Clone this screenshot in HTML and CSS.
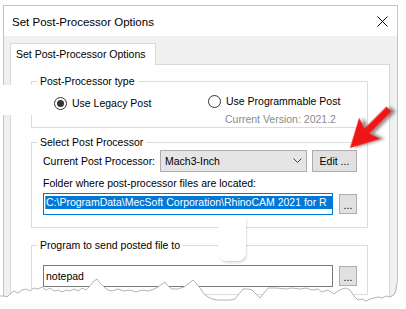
FILE: index.html
```html
<!DOCTYPE html>
<html lang="en">
<head>
    <meta charset="UTF-8">
    <title>Set Post-Processor Options</title>
    <link rel="stylesheet" href="styles.css">
</head>
<body>
    <div class="dialog">
        <div class="titlebar">
            <span class="title">Set Post-Processor Options</span>
            <svg class="close" width="11" height="11" viewBox="0 0 11 11">
                <path d="M0.5 0.5 L10.5 10.5 M10.5 0.5 L0.5 10.5" stroke="#000" stroke-width="1" fill="none"/>
            </svg>
        </div>
        <div class="dialog-body">
            <div class="tab">Set Post-Processor Options</div>
            <div class="panel">
                <!-- Post-Processor type -->
                <div class="group group-type">
                    <div class="legend">Post-Processor type</div>
                    <div class="radio-row">
                        <label class="radio radio-legacy checked"><span class="dot"></span>Use Legacy Post</label>
                        <div class="radio-col">
                            <label class="radio"><span class="dot"></span>Use Programmable Post</label>
                            <div class="version">Current Version: 2021.2</div>
                        </div>
                    </div>
                </div>

                <!-- Select Post Processor -->
                <div class="group group-select">
                    <div class="legend">Select Post Processor</div>
                    <div class="row row-combo">
                        <span class="row-label">Current Post Processor:</span>
                        <div class="combo">
                            <span>Mach3-Inch</span>
                            <svg width="9" height="6" viewBox="0 0 9 6"><path d="M0.5 0.5 L4.5 4.5 L8.5 0.5" stroke="#444" fill="none"/></svg>
                        </div>
                        <div class="btn btn-edit">Edit ...</div>
                    </div>
                    <div class="folder-label">Folder where post-processor files are located:</div>
                    <div class="row row-field">
                        <div class="field field-focus"><span class="selected">C:\ProgramData\MecSoft Corporation\RhinoCAM 2021 for R</span></div>
                        <div class="btn btn-browse">...</div>
                    </div>
                </div>

                <!-- Program to send posted file to -->
                <div class="group group-program">
                    <div class="legend">Program to send posted file to</div>
                    <div class="row row-notepad">
                        <div class="field"><span class="plain">notepad</span></div>
                        <div class="btn btn-browse">...</div>
                    </div>
                </div>
            </div>
        </div>
    </div>

    <div class="blob blob-left"></div>
    <div class="blob blob-mid"></div>

    <svg class="overlay" width="406" height="309" viewBox="0 0 406 309">
        <defs>
            <filter id="shadow" x="-30%" y="-30%" width="170%" height="170%">
                <feDropShadow dx="3" dy="3" stdDeviation="1.6" flood-color="#000" flood-opacity="0.45"/>
            </filter>
        </defs>
        <polygon transform="translate(350 148) rotate(-45)" points="0,0 28,-15 24,-3.5 55,-3.5 55,3.5 24,3.5 28,15" fill="#ee1515" filter="url(#shadow)"/>
        <polygon fill="#fff" points="0,296 4,296 7,297 10,294 14,291 18,293 22,290 26,289 30,291 34,288 38,289 42,287 46,290 50,288 54,291 58,290 62,292 66,290 70,291 74,289 78,291 82,288 86,290 90,286 94,281 97,279 100,283 104,287 108,290 112,291 118,289 124,291 130,290 136,292 142,290 148,291 154,289 158,287 162,284 165,282 168,286 172,289 178,289 184,287 188,284 193,280 196,283 200,288 204,294 208,297 212,299 218,300 224,300 230,300 235,299 238,295 243,289 248,289 252,290 256,294 260,298 264,293 268,288 276,288 286,289 292,288 300,289 306,288 312,290 318,289 322,292 328,290 334,294 338,291 342,289 346,288 350,290 354,296 358,300 362,299 366,301 370,299 374,298 378,297 382,298 386,296 390,297 394,295 396,290 397,283 406,283 406,309 0,309"/>
        <polyline fill="none" stroke="#b4b4b4" stroke-width="1" points="0,296 4,296 7,297 10,294 14,291 18,293 22,290 26,289 30,291 34,288 38,289 42,287 46,290 50,288 54,291 58,290 62,292 66,290 70,291 74,289 78,291 82,288 86,290 90,286 94,281 97,279 100,283 104,287 108,290 112,291 118,289 124,291 130,290 136,292 142,290 148,291 154,289 158,287 162,284 165,282 168,286 172,289 178,289 184,287 188,284 193,280 196,283 200,288 204,294 208,297 212,299 218,300 224,300 230,300 235,299 238,295 243,289 248,289 252,290 256,294 260,298 264,293 268,288 276,288 286,289 292,288 300,289 306,288 312,290 318,289 322,292 328,290 334,294 338,291 342,289 346,288 350,290 354,296 358,300 362,299 366,301 370,299 374,298 378,297 382,298 386,296 390,297 394,295 396,290 397,283"/>
    </svg>
</body>
</html>
```

FILE: styles.css
```css
* {
    margin: 0;
    padding: 0;
    box-sizing: border-box;
}

body {
    width: 406px;
    height: 309px;
    background-color: #fff;
    font-family: "Liberation Sans", Arial, sans-serif;
    font-size: 10.5px;
    color: #000;
    position: relative;
    overflow: hidden;
}

.dialog {
    margin: 5px 0 0 3px;
    width: 395px;
    border: 1px solid #c4c4c4;
    background-color: #fff;
}

.titlebar {
    height: 30px;
    display: flex;
    align-items: center;
    justify-content: space-between;
    padding: 0 9px 0 8px;
}

.title {
    font-size: 11.5px;
    line-height: 16px;
    padding-top: 1px;
}

.close {
    display: block;
}

.dialog-body {
    background-color: #f0f0f0;
    padding: 7px 7px 0 6px;
    height: 268px;
}

.tab {
    position: relative;
    z-index: 1;
    width: 146px;
    height: 22px;
    margin-bottom: -1px;
    border: 1px solid #d9d9d9;
    border-bottom: none;
    background-color: #fff;
    padding: 4px 0 0 5px;
    line-height: 13px;
}

.panel {
    border: 1px solid #d9d9d9;
    background-color: #fff;
    padding: 16px 0 0 20px;
    height: 240px;
}

.group {
    width: 337px;
    border: 1px solid #dcdcdc;
    padding: 0 0 0 11px;
}

.legend {
    display: block;
    width: fit-content;
    margin: -8px 0 0 -6px;
    padding: 0 3px;
    background-color: #fff;
    line-height: 14px;
}

/* radio group */
.group-type {
    padding-bottom: 1px;
}

.radio-row {
    display: flex;
    margin: 5px 0 0 11px;
}

.radio {
    display: flex;
    align-items: center;
    line-height: 16px;
}

.radio-legacy {
    width: 154px;
    padding-top: 2px;
    align-self: flex-start;
}

.dot {
    width: 13px;
    height: 13px;
    border: 1px solid #333;
    border-radius: 50%;
    margin-right: 5px;
    background-color: #fff;
    display: flex;
    align-items: center;
    justify-content: center;
}

.checked .dot::after {
    content: "";
    width: 7px;
    height: 7px;
    border-radius: 50%;
    background-color: #333;
}

.version {
    margin: 3px 0 0 17px;
    line-height: 14px;
    color: #8a8a8a;
}

/* select post processor */
.group-select {
    margin-top: 14px;
    padding-bottom: 12px;
}

.row {
    display: flex;
    align-items: center;
}

.row-combo {
    margin-top: 1px;
}

.row-label {
    width: 117px;
    white-space: nowrap;
}

.combo {
    width: 147px;
    height: 22px;
    border: 1px solid #adadad;
    background-color: #e5e5e5;
    display: flex;
    align-items: center;
    justify-content: space-between;
    padding: 0 4px 0 4px;
}

.btn {
    height: 22px;
    border: 1px solid #adadad;
    background-color: #e1e1e1;
    display: flex;
    align-items: center;
    justify-content: center;
}

.btn-edit {
    width: 45px;
    margin-left: 5px;
}

.btn-browse {
    width: 18px;
    height: 20px;
    margin-left: 6px;
    padding-top: 2px;
}

.folder-label {
    margin-top: 4px;
    line-height: 14px;
}

.row-field {
    margin-top: 3px;
}

.field {
    width: 290px;
    height: 22px;
    border: 1px solid #7a7a7a;
    padding: 2px 0 0 1px;
    overflow: hidden;
    white-space: nowrap;
}

.field-focus {
    border-color: #0078d7;
}

.selected {
    display: block;
    line-height: 13px;
    background-color: #0078d7;
    color: #fff;
    border-left: 1px solid #f08000;
    overflow: hidden;
}

.plain {
    display: block;
    line-height: 16px;
    padding-left: 1px;
}

/* program to send */
.group-program {
    margin-top: 17px;
    height: 50px;
}

.row-notepad {
    margin-top: 13px;
}

/* cut-outs over the screenshot */
.blob {
    position: absolute;
    background-color: #fff;
}

.blob-left {
    left: 0;
    top: 85px;
    width: 52px;
    height: 30px;
    background: linear-gradient(to right, #fff 80%, rgba(255, 255, 255, 0));
}

.blob-mid {
    left: 218px;
    top: 216px;
    width: 28px;
    height: 45px;
    border-radius: 0 0 8px 8px;
    box-shadow: 1px 2px 3px -1px rgba(0, 0, 0, 0.25);
}

.overlay {
    position: absolute;
    left: 0;
    top: 0;
    pointer-events: none;
}
```
